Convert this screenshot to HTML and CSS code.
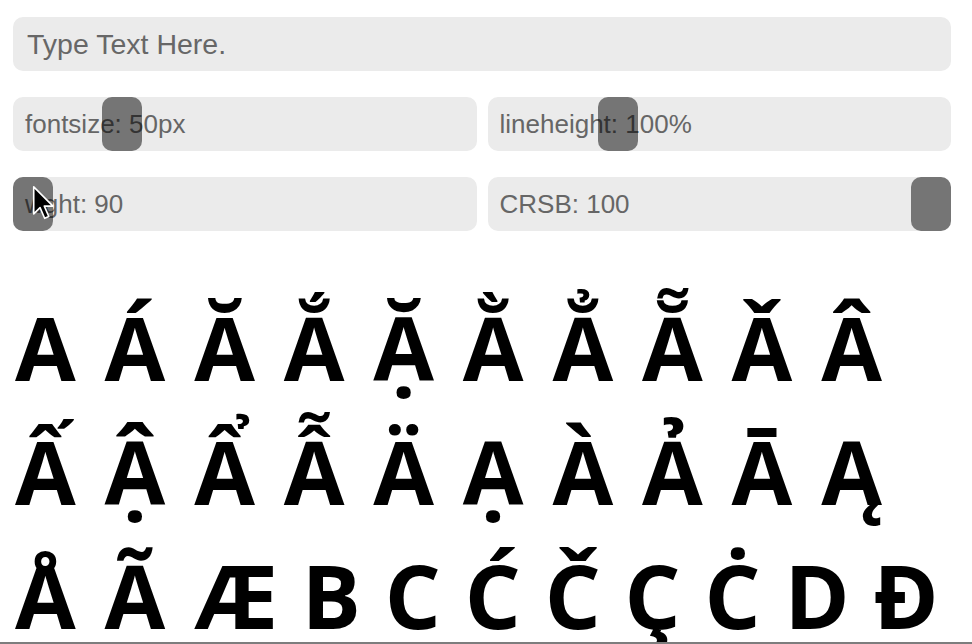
FILE: index.html
```html
<!DOCTYPE html>
<html lang="en">
<head>
<meta charset="utf-8">
<title>Font Tester</title>
<link rel="stylesheet" href="styles.css">
</head>
<body>
<main class="page">
  <input class="sample-input" type="text" placeholder="Type Text Here.">
  <div class="controls">
    <div class="slider">
      <span class="slider-label">fontsize: 50px</span>
      <input class="slider-range" type="range" min="10" max="200" value="50">
    </div>
    <div class="slider">
      <span class="slider-label">lineheight: 100%</span>
      <input class="slider-range" type="range" min="0" max="385" value="100">
    </div>
    <div class="slider">
      <span class="slider-label">wght: 90</span>
      <input class="slider-range" type="range" min="90" max="900" value="90">
      <svg class="cursor" width="23" height="36" viewBox="0 0 20 31" aria-hidden="true">
        <path d="M1.5 1.5 L1.5 25 L7 19.5 L11 28.8 L14.6 27.2 L10.7 18.2 L18.2 18.2 Z" fill="#000" stroke="#fff" stroke-width="1.4" stroke-linejoin="round"/>
      </svg>
    </div>
    <div class="slider">
      <span class="slider-label">CRSB: 100</span>
      <input class="slider-range" type="range" min="0" max="100" value="100">
    </div>
  </div>
  <p class="glyphs">
    <span class="glyph-row">A Á Ă Ắ Ặ Ằ Ẳ Ẵ Ǎ Â</span>
    <span class="glyph-row">Ấ Ậ Ẩ Ẫ Ä Ạ À Ả Ā Ą</span>
    <span class="glyph-row">Å Ã Æ<span class="glyph-tight"> B C Ć Č Ç Ċ D Đ</span></span>
  </p>
</main>
<div class="bottom-edge"></div>
</body>
</html>
```

FILE: styles.css
```css
html, body {
  margin: 0;
  padding: 0;
  background: #ffffff;
  overflow: hidden;
}

.page {
  padding: 17px 21px 0 13px;
  font-family: "Liberation Sans", Arial, sans-serif;
}

.sample-input {
  display: block;
  box-sizing: border-box;
  width: 100%;
  height: 54px;
  margin: 0;
  padding: 0 14px;
  border: none;
  border-radius: 10px;
  background: #ebebeb;
  font-family: "Liberation Sans", Arial, sans-serif;
  font-size: 28.5px;
  color: #666;
  outline: none;
}

.sample-input::placeholder {
  color: #676767;
  opacity: 1;
}

.controls {
  display: grid;
  grid-template-columns: 1fr 1fr;
  column-gap: 11px;
  row-gap: 26px;
  margin-top: 26px;
}

.slider {
  position: relative;
  height: 54px;
  border-radius: 10px;
  background: #ebebeb;
  display: flex;
  align-items: center;
  padding-left: 12px;
}

.slider-label {
  font-size: 26px;
  color: #666;
  white-space: nowrap;
}

.slider-range {
  -webkit-appearance: none;
  appearance: none;
  position: absolute;
  inset: 0;
  width: 100%;
  height: 54px;
  margin: 0;
  padding: 0;
  background: transparent;
  cursor: pointer;
}

.slider-range::-webkit-slider-runnable-track {
  height: 54px;
  background: transparent;
  border: none;
}

.slider-range::-webkit-slider-thumb {
  -webkit-appearance: none;
  appearance: none;
  width: 40px;
  height: 54px;
  border: none;
  border-radius: 10px;
  background: rgba(0, 0, 0, 0.5);
}

.slider-range::-moz-range-thumb {
  width: 40px;
  height: 54px;
  border: none;
  border-radius: 10px;
  background: rgba(0, 0, 0, 0.5);
}

.cursor {
  position: absolute;
  left: 19px;
  top: 8px;
  pointer-events: none;
}

.glyphs {
  margin: 54px 0 0 0;
  padding-left: 2px;
  font-family: "Open Sans", "Noto Sans", sans-serif;
  font-weight: 700;
  font-size: 88px;
  line-height: 124px;
  color: #000;
}

.glyph-row {
  display: block;
  white-space: nowrap;
  word-spacing: 6px;
}

.glyph-tight {
  word-spacing: 1px;
}

.bottom-edge {
  position: fixed;
  left: 0;
  right: 0;
  bottom: 0;
  height: 2px;
  background: #7d7d7d;
}
```
